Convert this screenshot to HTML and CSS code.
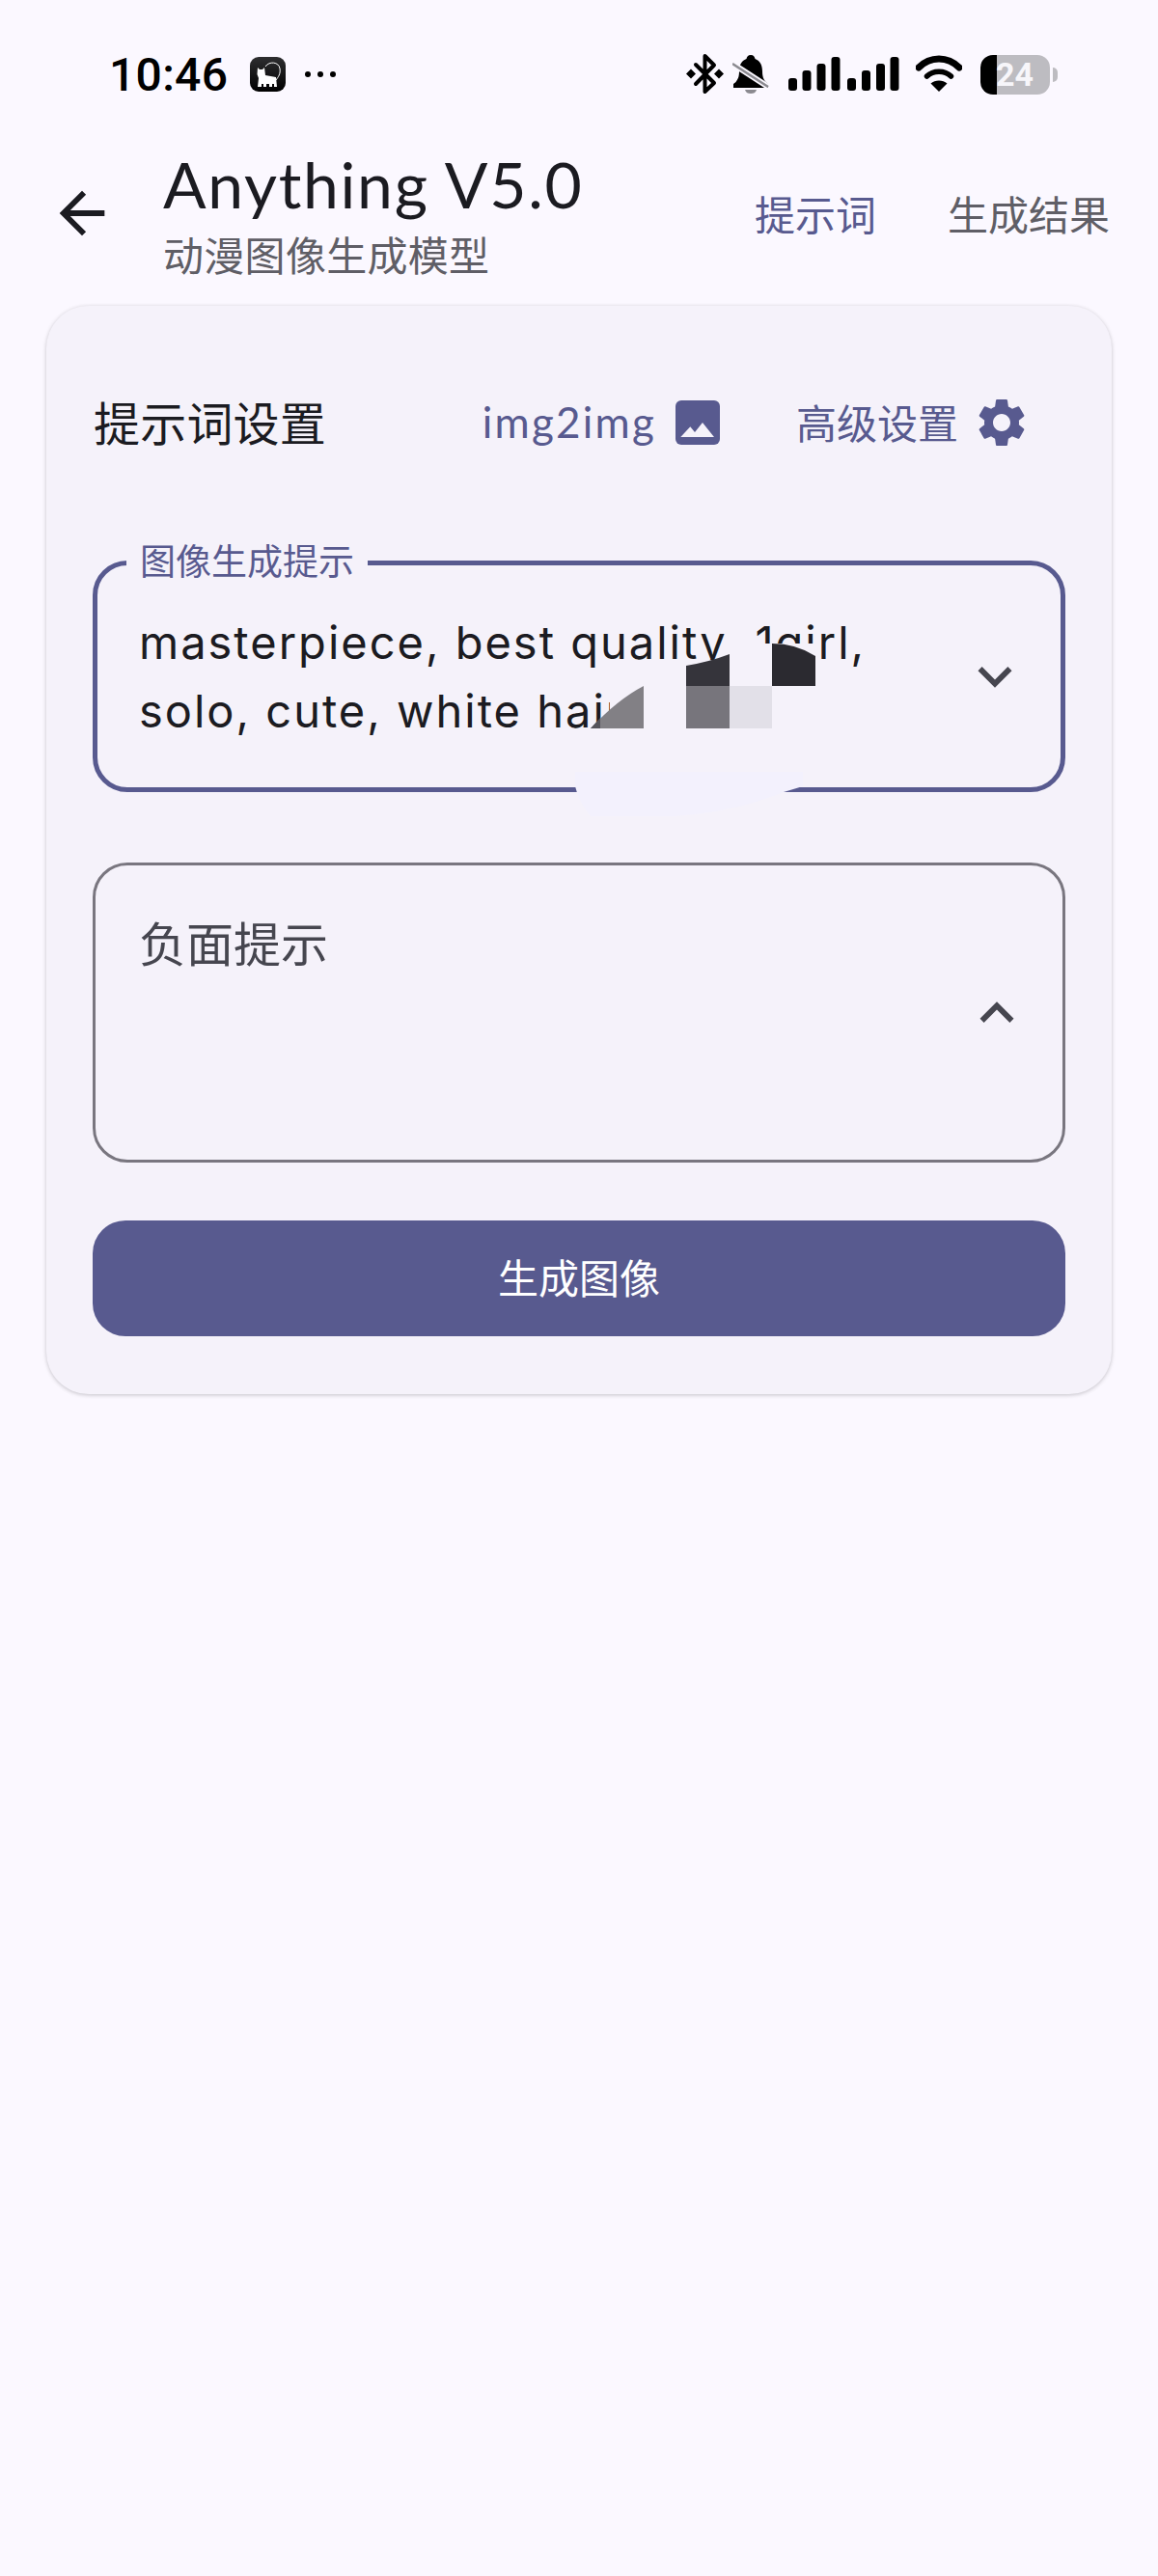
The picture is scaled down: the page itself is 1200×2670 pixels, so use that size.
FILE: index.html
```html
<!DOCTYPE html>
<html lang="zh-CN">

<head>
    <meta charset="UTF-8">
    <meta name="viewport" content="width=device-width, initial-scale=1.0">
    <title>Anything V5.0</title>
    <link rel="stylesheet" href="styles.css">
</head>

<body>
    <!-- Status bar -->
    <div class="status-bar">
        <span class="time">10:46</span>
        <svg class="app-icon" width="37" height="36" viewBox="0 0 37 36">
            <defs>
                <linearGradient id="appFill" x1="0" y1="0" x2="0" y2="1">
                    <stop offset="0" stop-color="#2e2e30" />
                    <stop offset="1" stop-color="#000" />
                </linearGradient>
            </defs>
            <rect width="37" height="36" rx="9" fill="url(#appFill)" />
            <path d="M16 10 C20 4 30 5 31 12 C32 18 29 21 27 24" fill="none" stroke="#fff" stroke-width="1" />
            <path d="M8 11 L10 13 L13 13 L15 11 L16 19 L27 21 L28 31 L25 31 L25 28 L23 28 L23 31 L20 31 L20 28 L17 28 L17 31 L14 31 L14 28 L12 28 L12 31 L8 31 L9 22 L7.500 18 Z" fill="#fff" />
        </svg>
        <span class="status-dots"><i></i><i></i><i></i></span>

        <div class="status-right">
            <svg class="status-bt" width="39" height="44" viewBox="0 0 39 44">
                <path d="M10 12 L29 31 L19.500 40 V3 L29 12.500 L10 32" fill="none" stroke="#000" stroke-width="4" stroke-linejoin="round" stroke-linecap="round" />
                <path d="M5 16.500 L10 21.500 L5 26.500 L0 21.500 Z M34 16.500 L39 21.500 L34 26.500 L29 21.500 Z" fill="#000" />
            </svg>
            <svg class="status-bell" width="38" height="44" viewBox="0 0 38 44">
                <path d="M19 2 C22 2 23 4 23.500 6 C29 8 31 13 31 19 C31 26 33 29 37 32 L37 36 H1 V32 C5 29 7 26 7 19 C7 13 9 8 14.500 6 C15 4 16 2 19 2 Z" fill="#000" />
                <path d="M13 38 H25 C24 41 22 42 19 42 C16 42 14 41 13 38 Z" fill="#8b8a90" />
                <path d="M0 11 L37 35" stroke="#fbf8ff" stroke-width="6" />
                <path d="M0 11 L37 35" stroke="#8b8a90" stroke-width="2.500" />
            </svg>
            <svg class="status-signal" width="115" height="44" viewBox="0 0 115 44">
                <rect x="0" y="26" width="9" height="13" rx="3" />
                <rect x="14.500" y="18" width="9" height="21" rx="3" />
                <rect x="29.500" y="11" width="9" height="28" rx="3" />
                <rect x="44.500" y="4" width="9" height="35" rx="3" />
                <rect x="61" y="26" width="9" height="13" rx="3" />
                <rect x="76" y="18" width="9" height="21" rx="3" />
                <rect x="91" y="11" width="9" height="28" rx="3" />
                <rect x="105.500" y="4" width="9" height="35" rx="3" />
            </svg>
            <svg class="status-wifi" width="48" height="44" viewBox="0 0 48 44">
                <path d="M3 15 C15 3 33 3 45 15" fill="none" stroke="#000" stroke-width="7" stroke-linecap="round" />
                <path d="M11.500 24 C18 17.500 30 17.500 36.500 24" fill="none" stroke="#000" stroke-width="5.500" stroke-linecap="round" />
                <path d="M15.500 31.500 C20 27.500 28 27.500 32.500 31.500 L24 40 Z" fill="#000" />
            </svg>
            <div class="battery">
                <span class="battery-level">24</span>
            </div>
        </div>
    </div>

    <!-- Top app bar -->
    <div class="top-bar">
        <svg class="back-icon" width="70" height="70" viewBox="0 0 24 24">
            <path d="M20 11H7.830l5.590-5.590L12 4l-8 8 8 8 1.410-1.410L7.830 13H20v-2z" />
        </svg>
        <div class="top-title">
            <div class="model-name">Anything V5.0</div>
            <div class="model-desc">动漫图像生成模型</div>
        </div>
        <div class="tabs">
            <span class="tab active">提示词</span>
            <span class="tab">生成结果</span>
        </div>
    </div>

    <!-- Prompt card -->
    <div class="card">
        <div class="card-head">
            <span class="card-title">提示词设置</span>
            <div class="card-actions">
                <span class="action-text latin">img2img</span>
                <svg class="image-icon" width="46" height="46" viewBox="0 0 46 46">
                    <rect width="46" height="46" rx="6" fill="#585a8f" />
                    <path d="M5.300 38 L15.300 27.300 L20 33 L28 23 L40 38 Z" fill="#f5f2fa" />
                </svg>
                <span class="action-text advanced">高级设置</span>
                <svg class="gear-icon" width="60" height="60" viewBox="0 0 24 24">
                    <path d="M19.140 12.940c.04-.3.06-.61.06-.94 0-.32-.02-.64-.07-.94l2.030-1.580a.49.49 0 0 0 .12-.61l-1.920-3.320a.488.488 0 0 0-.59-.22l-2.390.96c-.5-.38-1.030-.7-1.620-.94l-.36-2.540a.484.484 0 0 0-.48-.41h-3.840c-.24 0-.43.17-.47.41l-.36 2.540c-.59.24-1.130.57-1.620.94l-2.390-.96c-.22-.08-.47 0-.59.22L2.740 8.870c-.12.21-.08.47.12.61l2.030 1.580c-.05.3-.09.63-.09.94s.02.64.07.94l-2.030 1.580a.49.49 0 0 0-.12.61l1.920 3.320c.12.22.37.29.59.22l2.390-.96c.5.38 1.030.7 1.620.94l.36 2.540c.05.24.24.41.48.41h3.840c.24 0 .44-.17.47-.41l.36-2.540c.59-.24 1.130-.56 1.620-.94l2.390.96c.22.08.47 0 .59-.22l1.920-3.320c.12-.22.07-.47-.12-.61l-2.010-1.580zM12 15.600c-1.980 0-3.600-1.620-3.600-3.600s1.620-3.600 3.600-3.600 3.600 1.620 3.600 3.600-1.620 3.600-3.600 3.600z" />
                </svg>
            </div>
        </div>

        <div class="field field-focused">
            <span class="field-label">图像生成提示</span>
            <div class="field-text">masterpiece, best quality, 1girl, solo, cute, white hair,</div>
            <svg class="chevron" width="70" height="70" viewBox="0 0 24 24">
                <path d="M16.590 8.590L12 13.170 7.410 8.590 6 10l6 6 6-6z" />
            </svg>
            <!-- loading glitch that sits over the text, coordinates are page pixels -->
            <svg class="glitch" width="1008" height="280" viewBox="96 581 1008 280">
                <path d="M596 800 L832 800 L832 815 L812 821 Q760 842 700 846 L612 846 Q600 832 596 815 Z" fill="#f3f1fd" />
                <rect x="756" y="667" width="89" height="44" fill="#f5f2fa" />
                <rect x="711" y="684" width="45" height="27" fill="#f5f2fa" />
                <rect x="632" y="702" width="380" height="70" fill="#f5f2fa" />
                <path d="M711 690 Q735 686 756 678 V711 H711 Z" fill="#35343b" />
                <path d="M800 667 Q825 667 845 680 V711 H800 Z" fill="#2b2a30" />
                <rect x="711" y="711" width="45" height="44" fill="#77757c" />
                <rect x="756" y="711" width="44" height="44" fill="#e2e0e8" />
                <path d="M612 755 Q640 725 667 711 V755 Z" fill="#828085" />
                <path d="M612 755 L622 744 V755 Z" fill="#55545b" />
            </svg>
        </div>

        <div class="field field-idle">
            <div class="field-hint">负面提示</div>
            <svg class="chevron" width="70" height="70" viewBox="0 0 24 24">
                <path d="M12 8l-6 6 1.410 1.410L12 10.830l4.590 4.580L18 14z" />
            </svg>
        </div>

        <div class="generate-button">生成图像</div>
    </div>
</body>

</html>
```

FILE: styles.css
```css
body {
    margin: 0;
    height: 2670px;
    overflow: hidden;
    background-color: #fbf8ff;
    color: #1b1b21;
    font-family: "Lato", "Noto Sans CJK SC", sans-serif;
}

/* Status bar */
.status-bar {
    display: flex;
    align-items: center;
    height: 154px;
    padding: 0 104px 0 113px;
}

.time {
    font-family: "Roboto", sans-serif;
    font-size: 48px;
    font-weight: 500;
    letter-spacing: 0.3px;
    color: #000;
}

.app-icon {
    margin-left: 23px;
}

.status-dots {
    display: flex;
    gap: 7px;
    margin-left: 20px;
}

.status-dots i {
    width: 6px;
    height: 6px;
    border-radius: 50%;
    background-color: #000;
}

.status-right {
    display: flex;
    align-items: center;
    margin-left: auto;
}

.status-bell {
    margin-left: 9px;
}

.status-signal {
    margin-left: 20px;
}

.status-wifi {
    margin-left: 17px;
}

.battery {
    position: relative;
    width: 72px;
    height: 41px;
    margin-left: 19px;
    margin-right: 8px;
    border-radius: 13px;
    background: linear-gradient(to right, #000 17px, #bdbcc1 17px);
}

/* battery nub */
.battery::after {
    content: "";
    position: absolute;
    top: 13px;
    right: -8px;
    width: 5px;
    height: 15px;
    border-radius: 0 6px 6px 0;
    background-color: #bdbcc1;
}

.battery-level {
    display: block;
    padding-left: 16px;
    font-family: "Roboto", sans-serif;
    font-size: 34px;
    font-weight: 700;
    line-height: 41px;
    color: #f7f6fa;
}

/* Top app bar */
.top-bar {
    display: flex;
    align-items: center;
    height: 134px;
    padding: 0 50px 0 50px;
}

.back-icon {
    fill: #1b1b21;
}

.top-title {
    margin-left: 49px;
}

.model-name {
    font-size: 66px;
    line-height: 80px;
    letter-spacing: 1.7px;
}

.model-desc {
    margin-top: 8px;
    font-size: 42px;
    line-height: 52px;
    letter-spacing: 0.3px;
    color: #5f5e66;
}

.tabs {
    display: flex;
    gap: 74px;
    margin-left: auto;
    padding-bottom: 2px;
}

.tab {
    font-size: 42px;
    color: #5f5e66;
}

.tab.active {
    color: #585a8f;
}

/* Card */
.card {
    margin: 29px 48px 0;
    padding: 72px 48px 60px;
    border-radius: 44px;
    background-color: #f5f2fa;
    box-shadow: 0 1px 4px rgba(0, 0, 0, 0.22);
}

.card-head {
    display: flex;
    align-items: center;
    height: 98px;
}

.card-title {
    margin-left: 1px;
    padding-bottom: 4px;
    font-size: 48px;
    letter-spacing: 0.2px;
}

.card-actions {
    display: flex;
    align-items: center;
    margin-left: auto;
    margin-right: 36px;
}

.action-text {
    padding-bottom: 3px;
    font-size: 42px;
    color: #585a8f;
}

.action-text.latin {
    font-size: 44px;
    letter-spacing: 2.2px;
}

.image-icon {
    margin-left: 20px;
}

.action-text.advanced {
    margin-left: 79px;
}

.gear-icon {
    margin-left: 15px;
    fill: #585a8f;
}

/* Outlined fields */
.field {
    position: relative;
    display: flex;
    justify-content: space-between;
    box-sizing: border-box;
    padding-right: 33px;
    border-radius: 36px;
}

.field-focused {
    align-items: center;
    height: 240px;
    margin-top: 94px;
    padding-left: 43px;
    border: 5.5px solid #585a8f;
}

.field-idle {
    align-items: center;
    height: 311px;
    margin-top: 73px;
    padding-left: 45px;
    border: 3px solid #79767f;
}

.field-label {
    position: absolute;
    top: -22px;
    left: 30px;
    padding: 0 14px;
    background-color: #f5f2fa;
    font-size: 37px;
    line-height: 36px;
    color: #585a8f;
}

.field-text {
    width: 790px;
    font-family: "Inter", "Noto Sans CJK SC", sans-serif;
    font-size: 47px;
    line-height: 71px;
    letter-spacing: 2px;
}

.field-hint {
    align-self: flex-start;
    margin-top: 57px;
    font-size: 49px;
    line-height: 48px;
    color: #46464f;
}

.chevron {
    fill: #46464f;
}

.glitch {
    position: absolute;
    top: -5.5px;
    left: -5.5px;
    overflow: visible;
}

/* Generate button */
.generate-button {
    height: 120px;
    margin-top: 60px;
    border-radius: 34px;
    background-color: #585a8f;
    color: #fff;
    font-size: 42px;
    line-height: 120px;
    text-align: center;
}
```
